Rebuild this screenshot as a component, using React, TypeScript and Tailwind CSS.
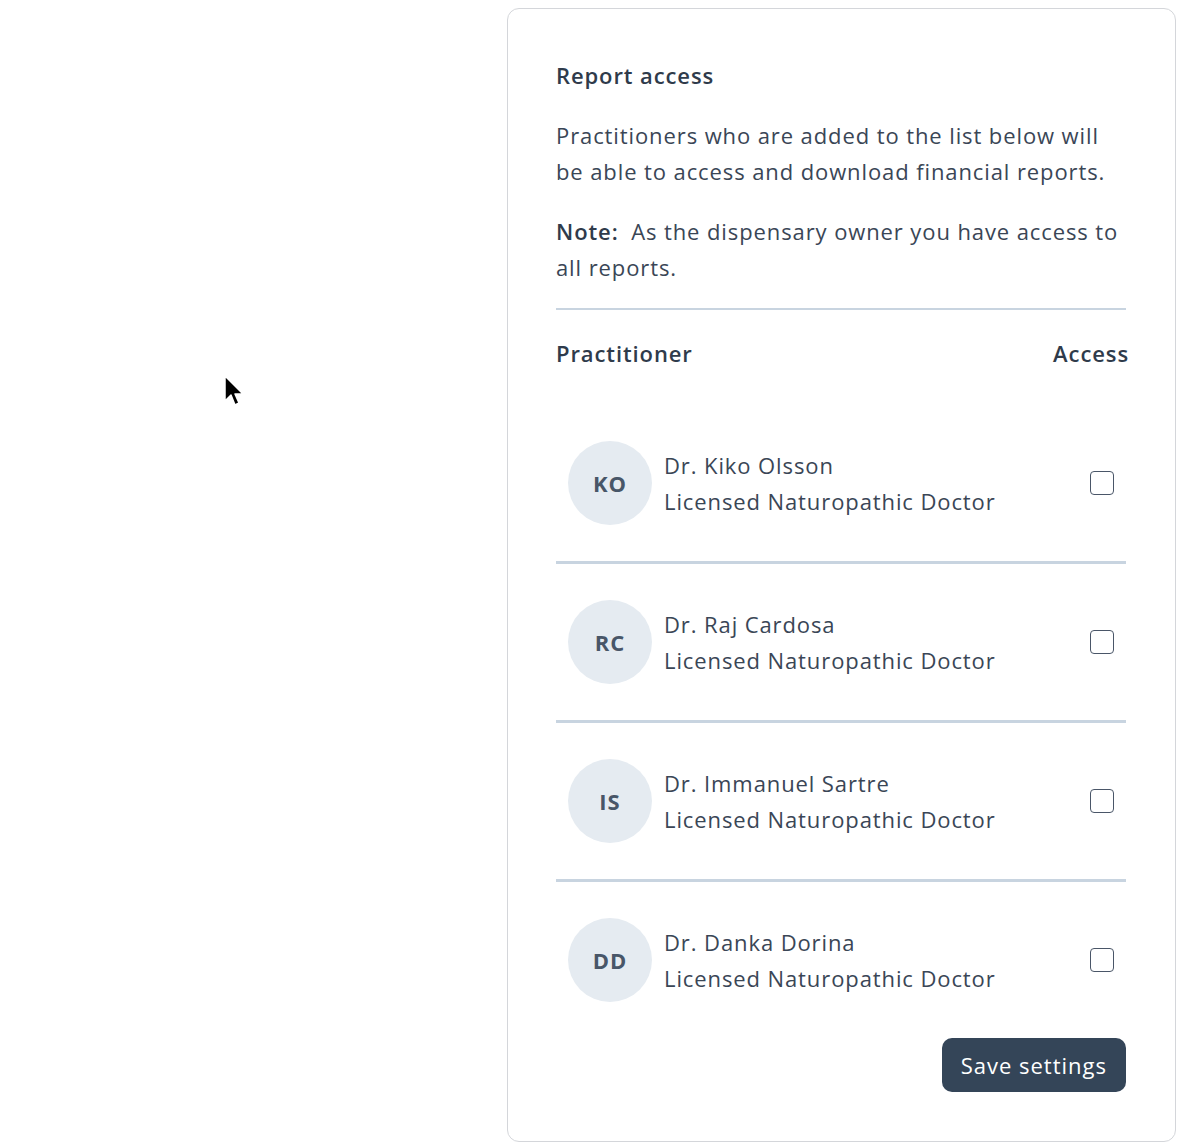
import { useState } from "react";

const practitioners = [
  { initials: "KO", name: "Dr. Kiko Olsson" },
  { initials: "RC", name: "Dr. Raj Cardosa" },
  { initials: "IS", name: "Dr. Immanuel Sartre" },
  { initials: "DD", name: "Dr. Danka Dorina" },
];

const Cursor = () => (
  <svg
    className="absolute left-[222px] top-[374px]"
    width="26"
    height="36"
    viewBox="0 0 26 36"
  >
    <path
      d="M3 2 L3 27 L9 21 L13 31 L17 29 L13 20 L21 20 Z"
      fill="#000"
      stroke="#fff"
      strokeWidth="1.5"
      strokeLinejoin="round"
    />
  </svg>
);

const PractitionerRow = ({
  initials,
  name,
  last,
}: {
  initials: string;
  name: string;
  last: boolean;
}) => {
  const [checked, setChecked] = useState(false);
  return (
    <div className={last ? "" : "border-b-[3px] border-[#c8d4e0]"}>
      <div className="flex items-center h-[156px] pl-3 pr-3">
        <div className="w-[84px] h-[84px] rounded-full bg-[#e5ebf1] flex items-center justify-center text-[22px] font-bold tracking-[1px] text-[#485668] shrink-0">
          {initials}
        </div>
        <div className="ml-3 flex-1 text-[22px] leading-[36px] tracking-[0.9px] text-[#3a4656]">
          <p>{name}</p>
          <p>Licensed Naturopathic Doctor</p>
        </div>
        <button
          type="button"
          onClick={() => setChecked(!checked)}
          className="w-6 h-6 rounded-[4px] border-[1.5px] border-[#4a5668] bg-white flex items-center justify-center"
        >
          {checked && (
            <svg width="16" height="16" viewBox="0 0 16 16">
              <path d="M3 8l3 3 7-7" stroke="#334155" strokeWidth="2" fill="none" />
            </svg>
          )}
        </button>
      </div>
    </div>
  );
};

export default function App() {
  return (
    <div className="relative w-[1188px] h-[1148px] bg-white font-['Open_Sans','Noto_Sans',sans-serif] text-[#2f3b4b]">
      <Cursor />
      <div className="flex justify-end pt-2 pr-[12px]">
        <div className="w-[669px] border border-[#d4d6da] rounded-xl pl-12 pr-[49px] pt-[49px] pb-[49px]">
          <h2 className="text-[22px] font-semibold leading-[34px] tracking-[0.9px] text-[#2f3b4b]">
            Report access
          </h2>
          <p className="mt-[25px] text-[22px] leading-[36px] tracking-[0.9px] text-[#3a4656]">
            Practitioners who are added to the list below will be able to access and download
            financial reports.
          </p>
          <p className="mt-[24px] text-[22px] leading-[36px] tracking-[0.9px] text-[#3a4656]">
            <span className="font-semibold text-[#2f3b4b] mr-[6px]">Note:</span> As the dispensary
            owner you have access to all reports.
          </p>
          <div className="mt-[23px] border-t-2 border-[#c8d4e0]" />
          <div className="flex justify-between items-center h-[86px] -mr-[3px] text-[22px] font-semibold tracking-[0.9px] text-[#2f3b4b]">
            <span>Practitioner</span>
            <span>Access</span>
          </div>
          <div className="mt-[9px]">
            {practitioners.map((p, i) => (
              <PractitionerRow
                key={p.initials}
                initials={p.initials}
                name={p.name}
                last={i === practitioners.length - 1}
              />
            ))}
          </div>
          <div className="flex justify-end">
            <button
              type="button"
              className="h-[54px] px-[19px] rounded-[10px] bg-[#344558] text-white text-[22px] tracking-[1px]"
            >
              Save settings
            </button>
          </div>
        </div>
      </div>
    </div>
  );
}
